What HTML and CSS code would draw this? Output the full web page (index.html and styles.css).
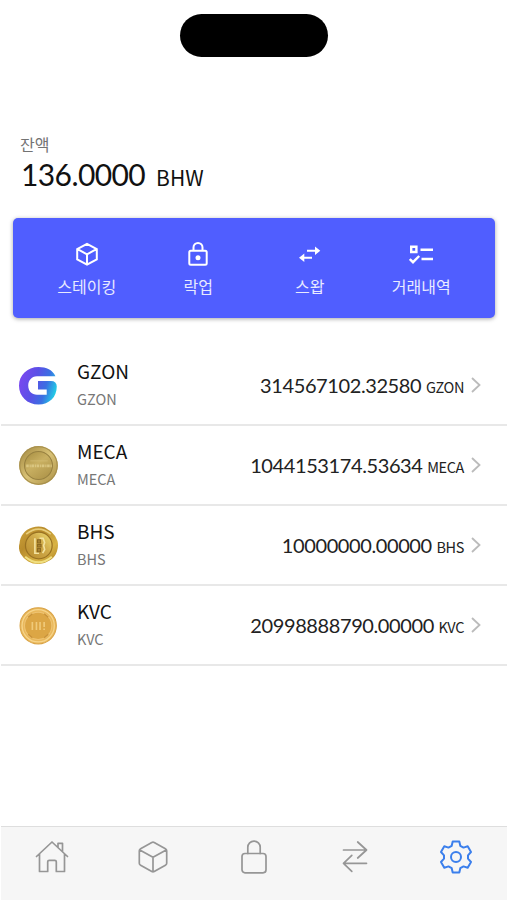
FILE: index.html
```html
<!DOCTYPE html>
<html lang="ko">
<head>
  <meta charset="UTF-8">
  <meta name="viewport" content="width=device-width, initial-scale=1.0">
  <title>BHW Wallet</title>
  <link rel="stylesheet" href="styles.css">
</head>
<body>
  <div class="screen">
    <div class="island"></div>

    <main class="content">
      <section class="balance">
        <div class="balance-label">잔액</div>
        <div class="balance-value">
          <span class="balance-amount">136.0000</span>
          <span class="balance-unit">BHW</span>
        </div>
      </section>

      <nav class="actions">
        <a class="action">
          <svg class="action-icon" viewBox="0 0 24 24"><path d="M12 1.800l9.800 5.200v10.300L12 22.600l-9.800-5.300V7zM2.600 7.200L12 12.400l9.400-5.200M12 12.400V22"/></svg>
          <span>스테이킹</span>
        </a>
        <a class="action">
          <svg class="action-icon" viewBox="0 0 24 24"><rect x="3.300" y="8.800" width="17.400" height="14" rx="1.500"/><path d="M7.500 9V5.500a4.500 4.500 0 0 1 9 0V9"/><circle class="fill" cx="12" cy="15.800" r="2.500"/></svg>
          <span>락업</span>
        </a>
        <a class="action">
          <svg class="action-icon" viewBox="0 0 24 24"><path d="M9 8.800h9M14 15.800H5"/><path class="fill" d="M17 4.600v8.400l5.300-4.200zM6.300 11.600V20L1 15.800z"/></svg>
          <span>스왑</span>
        </a>
        <a class="action">
          <svg class="action-icon list-icon" viewBox="0 0 24 24"><path d="M2.200 4.800h5.200v5.200H2.200z"/><path d="M11.500 7.800H24M12.500 17H24M.8 17l3.200 3.200 6.200-6.200"/></svg>
          <span>거래내역</span>
        </a>
      </nav>

      <ul class="token-list">
        <li class="token">
          <svg class="token-logo" viewBox="0 0 38 38">
            <defs>
              <linearGradient id="gzon" x1="0" y1=".35" x2="1" y2=".65">
                <stop offset="0" stop-color="#7a48f0"/>
                <stop offset=".4" stop-color="#5a50e6"/>
                <stop offset=".7" stop-color="#3a6fe2"/>
                <stop offset="1" stop-color="#20d4e6"/>
              </linearGradient>
            </defs>
            <path fill="url(#gzon)" d="M35.500 10H17.500C12 10 9 14.500 9 19c0 5.500 3.500 9 8.500 9H27v-5h-8.500v-8.500H31q5.800 0 5.800 5.500C36.800 30.500 29.500 37.500 19 37.500 8 37.500 0 29.500 0 19.200 0 9 8 1 19 1c7.500 0 14 3 16.500 9z"/>
          </svg>
          <div class="token-name">
            <strong>GZON</strong>
            <small>GZON</small>
          </div>
          <div class="token-amount">314567102.32580 <span>GZON</span></div>
          <svg class="chevron" viewBox="0 0 10 16"><path d="M1 1l7.500 7L1 15"/></svg>
        </li>
        <li class="token">
          <svg class="token-logo" viewBox="0 0 38 38">
            <defs>
              <linearGradient id="meca" x1="0" y1="0" x2="1" y2="1">
                <stop offset="0" stop-color="#9e843c"/>
                <stop offset=".5" stop-color="#d9c276"/>
                <stop offset="1" stop-color="#a88d43"/>
              </linearGradient>
              <linearGradient id="meca-in" x1="0" y1="0" x2=".7" y2="1">
                <stop offset="0" stop-color="#a58c40"/>
                <stop offset=".5" stop-color="#c9b062"/>
                <stop offset="1" stop-color="#b0964b"/>
              </linearGradient>
            </defs>
            <circle cx="19" cy="19" r="18.900" fill="url(#meca)"/>
            <circle cx="19" cy="19" r="18.200" fill="none" stroke="#a58e4c"/>
            <circle cx="19" cy="19" r="13.600" fill="url(#meca-in)" stroke="#978040" stroke-width="1"/>
            <path d="M11 14.500h17" stroke="#d3bd76" stroke-width=".7"/>
            <path d="M7 19.300h25" fill="none" stroke="#dac681" stroke-width="2.600" stroke-dasharray="2.500 .8 1.200 .6"/>
          </svg>
          <div class="token-name">
            <strong>MECA</strong>
            <small>MECA</small>
          </div>
          <div class="token-amount">1044153174.53634 <span>MECA</span></div>
          <svg class="chevron" viewBox="0 0 10 16"><path d="M1 1l7.500 7L1 15"/></svg>
        </li>
        <li class="token">
          <svg class="token-logo" viewBox="0 0 38 38">
            <defs>
              <linearGradient id="bhs" x1="0" y1="0" x2="1" y2="1">
                <stop offset="0" stop-color="#cfa43c"/>
                <stop offset=".35" stop-color="#b88c2c"/>
                <stop offset=".7" stop-color="#d9b344"/>
                <stop offset="1" stop-color="#a87b20"/>
              </linearGradient>
              <linearGradient id="bhs-in" x1="0" y1="1" x2="1" y2="0">
                <stop offset="0" stop-color="#b78a2c"/>
                <stop offset=".55" stop-color="#cfa948"/>
                <stop offset="1" stop-color="#f0df75"/>
              </linearGradient>
            </defs>
            <path fill="url(#bhs)" d="M13 1.500q6-2 12 0l6.500 4q4.500 4 6 9 1.200 5-.5 10-1.500 5-6 8.500-5 3.500-11 4-6 .5-11-2.500-5-3-7.500-7.500-2.500-5-1-10 .5-6 3.500-9.500 3.500-4.500 9-6z"/>
            <path d="M7 8Q19-2 31 8" fill="none" stroke="#e8cd7a" stroke-width="1.600"/>
            <path d="M6 30Q19 41 32 30" fill="none" stroke="#f0df80" stroke-width="2"/>
            <circle cx="19.300" cy="19" r="13" fill="url(#bhs-in)" stroke="#9a7222" stroke-width="1.200"/>
            <path d="M15.500 12v14.500h4M20 12h3.500l1.500 4-1 3 1 4-2 3.500" fill="none" stroke="#f3e3a0" stroke-width="1.600"/>
            <path d="M18 13.500h3v3h-3zM18 18h3.500v2.500H18zM18 22h3v3h-3z" fill="#a68031" stroke="#8a6820" stroke-width="1"/>
          </svg>
          <div class="token-name">
            <strong>BHS</strong>
            <small>BHS</small>
          </div>
          <div class="token-amount">10000000.00000 <span>BHS</span></div>
          <svg class="chevron" viewBox="0 0 10 16"><path d="M1 1l7.500 7L1 15"/></svg>
        </li>
        <li class="token">
          <svg class="token-logo" viewBox="0 0 38 38">
            <circle cx="18.700" cy="19.300" r="17.700" fill="#e9b85c" stroke="#d9a346" stroke-width="1"/>
            <circle cx="18.700" cy="19.300" r="15.700" fill="none" stroke="#f7d58b" stroke-width="1.200"/>
            <circle cx="18.700" cy="19.300" r="13.300" fill="#dca645" stroke="#efc474" stroke-width="1"/>
            <path d="M9 11l4-3.500M28.500 11l-4-3.500M9 27.500l4 3.500M28.500 27.500l-4 3.500" stroke="#c8923a" stroke-width="1.300"/>
            <path d="M13 15.500v8M17 15.500v8M20.500 15.500v8M24.500 15.500v5M24.500 22v1.500" fill="none" stroke="#f0ca7a" stroke-width="1.600"/>
          </svg>
          <div class="token-name">
            <strong>KVC</strong>
            <small>KVC</small>
          </div>
          <div class="token-amount">20998888790.00000 <span>KVC</span></div>
          <svg class="chevron" viewBox="0 0 10 16"><path d="M1 1l7.500 7L1 15"/></svg>
        </li>
      </ul>
    </main>

    <nav class="tabbar">
      <a class="tab">
        <svg viewBox="0 0 36 36"><path d="M2.500 17.500L18 3l15.500 14.500M5.500 15v17.500h8.200V22.800q0-1.500 1.500-1.500h5.600q1.500 0 1.500 1.500v9.700h8.200V15M24 8.500V4.300h4.500v8.500"/></svg>
      </a>
      <a class="tab">
        <svg viewBox="0 0 36 36"><path d="M16.800 3.500q1.200-.7 2.400 0l11.200 6.300q1.300.7 1.300 2v12.400q0 1.300-1.300 2l-11.200 6.400q-1.200.7-2.400 0L5.600 26.200q-1.300-.7-1.300-2V11.800q0-1.300 1.300-2zM4.800 11L18 18.300 31.200 11M18 18.300v14.200"/></svg>
      </a>
      <a class="tab">
        <svg viewBox="0 0 36 36"><rect x="6" y="14.500" width="24" height="19.300" rx="3"/><path d="M11.800 14.500V8.300a6.200 6.200 0 0 1 12.400 0v6.200"/></svg>
      </a>
      <a class="tab">
        <svg viewBox="0 0 36 36"><path d="M6.500 11h23M20.700 3l8.800 8-8.800 8M29.500 24.300h-23M14.800 16.300l-8.300 8 8.300 8"/></svg>
      </a>
      <a class="tab active">
        <svg viewBox="0 0 36 36"><path d="M14.700 2.500h6.600l1 4.300 3.200 1.800 4.200-1.300 3.300 5.700-3 3.300v3.400l3 3.300-3.300 5.700-4.200-1.300-3.200 1.800-1 4.300h-6.600l-1-4.300-3.200-1.800-4.200 1.300L3 23l3-3.300v-3.400L3 13l3.300-5.700 4.200 1.300 3.200-1.800z"/><circle cx="18" cy="18" r="5"/></svg>
      </a>
    </nav>
  </div>
</body>
</html>
```

FILE: styles.css
```css
* {
  margin: 0;
  padding: 0;
  box-sizing: border-box;
}

body {
  font-family: "Noto Sans CJK KR", sans-serif;
  background: #fff;
  color: #111;
}

.screen {
  display: flex;
  flex-direction: column;
  height: 900px;
}

.island {
  width: 148px;
  height: 43px;
  margin: 14px 0 0 180px;
  border-radius: 22px;
  background: #000;
}

.content {
  flex: 1;
  padding-top: 75px;
}

.balance {
  height: 86px;
  padding-left: 20px;
}

.balance-label {
  font-size: 16px;
  line-height: 24px;
  color: #737373;
}

.balance-value {
  display: flex;
  align-items: baseline;
  gap: 11px;
  padding-left: 1px;
  line-height: 36px;
}

.balance-amount {
  font-family: Lato, sans-serif;
  font-size: 30px;
  letter-spacing: -0.6px;
}

.balance-unit {
  font-size: 21px;
}

.actions {
  display: grid;
  grid-template-columns: repeat(4, 1fr);
  height: 100px;
  margin: 0 12px 0 13px;
  padding: 24px 18px 0;
  border-radius: 5px;
  background: #505eff;
  box-shadow: 0 1px 4px rgba(0, 0, 0, 0.35);
}

.action {
  display: flex;
  flex-direction: column;
  align-items: center;
  gap: 8px;
  font-size: 16px;
  line-height: 24px;
  color: #e8eaff;
}

.action-icon {
  width: 24px;
  height: 24px;
  fill: none;
  stroke: #fff;
  stroke-width: 2;
}

.action-icon .fill {
  fill: #fff;
  stroke: none;
}

.list-icon {
  stroke-width: 2.4;
}

.token-list {
  margin: 28px 0 0 1px;
  list-style: none;
}

.token {
  display: flex;
  align-items: center;
  height: 80px;
  padding: 0 26px 0 18px;
  border-bottom: 2px solid #e8e8e8;
}

.token-logo {
  width: 39px;
  height: 39px;
  margin-right: 19px;
}

.token-name {
  flex: 1;
}

.token-name strong,
.token-name small {
  display: block;
  font-weight: normal;
}

.token-name strong {
  font-size: 19px;
  line-height: 28px;
}

.token-name small {
  font-size: 14.5px;
  line-height: 28px;
  color: #777;
}

.token-amount {
  font-family: Lato, sans-serif;
  font-size: 20px;
  letter-spacing: -0.4px;
  color: #222;
}

.token-amount span {
  font-family: "Noto Sans CJK KR", sans-serif;
  font-size: 14.5px;
}

.chevron {
  width: 10px;
  height: 16px;
  margin-left: 7px;
  fill: none;
  stroke: #bbb;
  stroke-width: 1.8;
}

.tabbar {
  display: grid;
  grid-template-columns: repeat(5, 1fr);
  height: 74px;
  margin-left: 1px;
  padding-top: 12px;
  border-top: 1px solid #dedede;
  background: #f6f6f6;
}

.tab {
  display: flex;
  justify-content: center;
}

.tab svg {
  width: 36px;
  height: 36px;
  fill: none;
  stroke: #969696;
  stroke-width: 1.7;
  stroke-linejoin: round;
  stroke-linecap: round;
}

.tab.active svg {
  stroke: #3b7fec;
  stroke-width: 2;
}
```
